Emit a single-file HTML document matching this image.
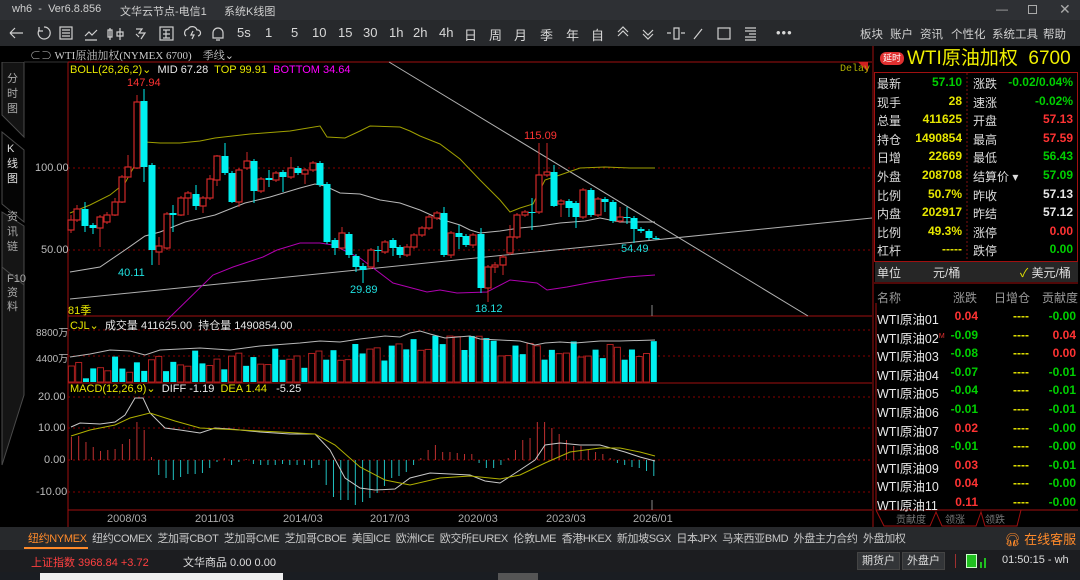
<!DOCTYPE html>
<html><head><meta charset="utf-8">
<style>
*{margin:0;padding:0;box-sizing:border-box}
body{width:1080px;height:580px;background:#000;overflow:hidden;position:relative;font-family:"Liberation Sans","Noto Sans CJK SC",sans-serif;font-size:12px;color:#ccc}
.a{position:absolute;white-space:nowrap}
#title{left:0;top:0;width:1080px;height:20px;background:#2e3034}
#tool{left:0;top:20px;width:1080px;height:26px;background:#27292c}
#nav{left:0;top:527px;width:1080px;height:23px;background:#27292c}
#stat{left:0;top:550px;width:1080px;height:22px;background:#1c1d20}
#task{left:0;top:572px;width:1080px;height:8px;background:#1a1d22}
.tb{color:#d8d8d8;font-size:13px;top:25px}
.tt{color:#cfcfcf;font-size:11px;top:3px}
.tr{color:#d0d0d0;font-size:11.5px;top:26px}
.r{color:#ff3333}.g{color:#00d000}.y{color:#e6e600}.w{color:#e8e8e8}
</style></head><body>
<div id="title" class="a"></div>
<div class="a tt" style="left:12px">wh6&nbsp; - &nbsp;Ver6.8.856</div>
<div class="a tt" style="left:120px">文华云节点-电信1</div>
<div class="a tt" style="left:224px">系统K线图</div>
<div class="a" style="left:996px;top:2px;color:#aaa;font-size:12px">—</div>
<div class="a" style="left:1028px;top:5px;width:9px;height:9px;border:1px solid #aaa"></div>
<div class="a" style="left:1059px;top:1px;color:#aaa;font-size:14px">✕</div>
<div id="tool" class="a"></div>
<svg class="a" style="left:0;top:20px" width="800" height="26" viewBox="0 20 800 26" fill="none" stroke="#d0d0d0" stroke-width="1.2">
<path d="M10 33h13M10 33l5-5M10 33l5 5"/>
<path d="M44 27a6 6 0 1 1-5 3M39 27v4h4"/>
<rect x="60" y="27" width="12" height="12"/><path d="M62 30h8M62 33h8M62 36h8"/>
<path d="M85 36l4-4 3 3 5-5M85 40h12"/>
<path d="M110 28v12M108 30h4v7h-4zM120 28v12M117 32h6v4h-6z"/>
<path d="M136 29l6 0-3 4h6l-4 6M136 34l3 3"/>
<rect x="160" y="27" width="13" height="13"/><path d="M163 30h7M166 30v8M163 34h7M163 38h7"/>
<path d="M186 36a4 4 0 0 1 2-7a5 5 0 0 1 9 1a3 3 0 0 1 1 6M193 31l-2 4h3l-2 4"/>
<path d="M213 38v-5a5 5 0 0 1 10 0v5h-10zM216 40h4"/>
<path d="M618 36l5-5 5 5M618 32l5-5 5 5M643 30l5 5 5-5M643 34l5 5 5-5"/>
<path d="M667 33h4M674 28h5v11h-5zM681 33h4"/>
<path d="M694 39l8-10"/>
<rect x="718" y="28" width="12" height="11"/>
<path d="M745 28h11M745 31h11M749 34h7M745 37h11M745 40h11"/>
</svg>
<div class="a tb" style="left:237px">5s</div>
<div class="a tb" style="left:265px">1</div>
<div class="a tb" style="left:291px">5</div>
<div class="a tb" style="left:312px">10</div>
<div class="a tb" style="left:338px">15</div>
<div class="a tb" style="left:363px">30</div>
<div class="a tb" style="left:389px">1h</div>
<div class="a tb" style="left:413px">2h</div>
<div class="a tb" style="left:439px">4h</div>
<div class="a tb" style="left:464px">日</div>
<div class="a tb" style="left:489px">周</div>
<div class="a tb" style="left:514px">月</div>
<div class="a tb" style="left:540px">季</div>
<div class="a tb" style="left:566px">年</div>
<div class="a tb" style="left:591px">自</div>
<div class="a tb" style="left:776px;letter-spacing:1px">•••</div>
<div class="a tr" style="left:860px">板块</div>
<div class="a tr" style="left:890px">账户</div>
<div class="a tr" style="left:920px">资讯</div>
<div class="a tr" style="left:951px">个性化</div>
<div class="a tr" style="left:992px">系统工具</div>
<div class="a tr" style="left:1043px">帮助</div>

<div class="a" style="left:30px;top:47px;color:#ccc;font-family:'Liberation Serif','Noto Serif CJK SC',serif;font-size:11px">⊂⊃ WTI原油加权(NYMEX 6700)&nbsp;&nbsp;&nbsp; 季线⌄</div>

<!-- left tabs -->
<svg class="a" style="left:0;top:62px" width="26" height="420" fill="#151515" stroke="#4a4a4a">
<path d="M2 0h22v75l-22-22z" fill="#141414"/>
<path d="M2 70l22 18v72l-22-18z" fill="#050505"/>
<path d="M2 150l22 14v70l-22-20z"/>
<path d="M2 205l22 18v110l-22 70z"/>
</svg>
<div class="a" style="left:7px;top:72px;width:12px;color:#aaa;font-size:11px;line-height:15px;white-space:normal">分时图</div>
<div class="a" style="left:7px;top:142px;width:12px;color:#e0e0e0;font-size:11px;line-height:15px;white-space:normal">K线图</div>
<div class="a" style="left:7px;top:210px;width:12px;color:#aaa;font-size:11px;line-height:15px;white-space:normal">资讯链</div>
<div class="a" style="left:7px;top:272px;width:12px;color:#aaa;font-size:11px;line-height:14px;white-space:normal">F10资料</div>

<svg id="ch" class="a" style="left:0;top:0" width="1080" height="580"></svg>

<div class="a" style="left:70px;top:63px;font-size:11px"><span style="color:#e6e600">BOLL(26,26,2)⌄</span>&nbsp; <span class="w">MID 67.28</span>&nbsp; <span style="color:#e6e600">TOP 99.91</span>&nbsp; <span style="color:#ff00ff">BOTTOM 34.64</span></div>
<div class="a" style="left:840px;top:64px;font-size:10px;color:#b0b000;font-family:'Liberation Mono',monospace">Delay</div>
<div class="a r" style="left:127px;top:77px;font-size:11px">147.94</div>
<div class="a" style="left:118px;top:267px;font-size:11px;color:#20e0e0">40.11</div>
<div class="a" style="left:350px;top:284px;font-size:11px;color:#20e0e0">29.89</div>
<div class="a" style="left:475px;top:303px;font-size:11px;color:#20e0e0">18.12</div>
<div class="a r" style="left:524px;top:130px;font-size:11px">115.09</div>
<div class="a" style="left:621px;top:243px;font-size:11px;color:#20e0e0">54.49</div>
<div class="a" style="left:68px;top:302px;font-size:11px;color:#e6e600">81季</div>
<div class="a" style="left:35px;top:162px;font-size:11px;color:#bbb">100.00</div>
<div class="a" style="left:41px;top:244px;font-size:11px;color:#bbb">50.00</div>
<div class="a" style="left:70px;top:317px;font-size:11px"><span style="color:#e6e600">CJL⌄</span>&nbsp; <span class="w">成交量 411625.00&nbsp; 持仓量 1490854.00</span></div>
<div class="a" style="left:36px;top:324px;font-size:10px;color:#bbb">8800万</div>
<div class="a" style="left:36px;top:350px;font-size:10px;color:#bbb">4400万</div>
<div class="a" style="left:70px;top:382px;font-size:11px"><span style="color:#e6e600">MACD(12,26,9)⌄</span>&nbsp; <span class="w">DIFF -1.19</span>&nbsp; <span style="color:#e6e600">DEA 1.44</span>&nbsp;&nbsp; <span class="w">-5.25</span></div>
<div class="a" style="left:38px;top:391px;font-size:11px;color:#bbb">20.00</div>
<div class="a" style="left:38px;top:422px;font-size:11px;color:#bbb">10.00</div>
<div class="a" style="left:44px;top:454px;font-size:11px;color:#bbb">0.00</div>
<div class="a" style="left:36px;top:486px;font-size:11px;color:#bbb">-10.00</div>
<div class="a" style="left:107px;top:513px;font-size:11px;color:#aaa">2008/03</div>
<div class="a" style="left:195px;top:513px;font-size:11px;color:#aaa">2011/03</div>
<div class="a" style="left:283px;top:513px;font-size:11px;color:#aaa">2014/03</div>
<div class="a" style="left:370px;top:513px;font-size:11px;color:#aaa">2017/03</div>
<div class="a" style="left:458px;top:513px;font-size:11px;color:#aaa">2020/03</div>
<div class="a" style="left:546px;top:513px;font-size:11px;color:#aaa">2023/03</div>
<div class="a" style="left:633px;top:513px;font-size:11px;color:#aaa">2026/01</div>

<!-- right panel -->
<div class="a" style="left:880px;top:52px;width:24px;height:13px;background:#e03030;border-radius:6px;color:#fff;font-size:9px;text-align:center;line-height:13px">延时</div>
<div class="a" style="left:907px;top:48px;color:#f0f000;font-size:19px;line-height:22px">WTI原油加权&nbsp; 6700</div>
<div id="rp"></div>

<!-- bottom -->
<div id="nav" class="a"></div>
<div class="a" style="left:28px;top:530px;font-size:11px;color:#c8c8c8;letter-spacing:-0.35px">
<span style="color:#ff8a2a">纽约NYMEX</span>&nbsp; 纽约COMEX&nbsp; 芝加哥CBOT&nbsp; 芝加哥CME&nbsp; 芝加哥CBOE&nbsp; 美国ICE&nbsp; 欧洲ICE&nbsp; 欧交所EUREX&nbsp; 伦敦LME&nbsp; 香港HKEX&nbsp; 新加坡SGX&nbsp; 日本JPX&nbsp; 马来西亚BMD&nbsp; 外盘主力合约&nbsp; 外盘加权</div>
<div class="a" style="left:24px;top:547px;width:64px;height:2px;background:#ff8a2a"></div>
<div class="a" style="left:1004px;top:529px;font-size:13px;color:#ff8a2a">🎧︎ 在线客服</div>
<div id="stat" class="a"></div>
<div class="a" style="left:31px;top:554px;font-size:11px;color:#ff4040">上证指数 3968.84 +3.72</div>
<div class="a" style="left:183px;top:554px;font-size:11px;color:#ddd">文华商品 0.00 0.00</div>
<div class="a" style="left:857px;top:552px;width:43px;height:18px;background:#333538;border:1px solid #444;font-size:11px;color:#ddd;text-align:center;line-height:16px">期货户</div>
<div class="a" style="left:902px;top:552px;width:43px;height:18px;background:#333538;border:1px solid #444;font-size:11px;color:#ddd;text-align:center;line-height:16px">外盘户</div>
<div class="a" style="left:955px;top:554px;width:1px;height:14px;background:#a03030"></div>
<div class="a" style="left:966px;top:554px;width:11px;height:14px;background:#20c020;border:1px solid #cfc"></div>
<div class="a" style="left:980px;top:562px;width:2px;height:6px;background:#20c020"></div>
<div class="a" style="left:984px;top:558px;width:2px;height:10px;background:#20c020"></div>
<div class="a" style="left:1002px;top:554px;font-size:11px;color:#ddd">01:50:15 - wh</div>
<div id="task" class="a"></div>
<div class="a" style="left:40px;top:573px;width:243px;height:7px;background:#f0f0f0"></div>
<div class="a" style="left:498px;top:573px;width:40px;height:7px;background:#555"></div>

<script>
var S='';
function L(x1,y1,x2,y2,c,d,w){S+='<line x1="'+x1+'" y1="'+y1+'" x2="'+x2+'" y2="'+y2+'" stroke="'+c+'" stroke-width="'+(w||1)+'"'+(d?' stroke-dasharray="'+d+'"':'')+'/>';}
function P(pts,c){S+='<polyline fill="none" stroke="'+c+'" stroke-width="1" points="'+pts.map(function(p){return p.join(',')}).join(' ')+'"/>';}
L(68,62,872,62,'#a01010');L(68,62,68,527,'#a01010');
L(68,316,872,316,'#a01010');L(68,383,872,383,'#a01010');L(68,510,872,510,'#a01010');
S+='<path d="M858 62h10v10z" fill="#d02020"/>';
L(24,62,68,62,'#333');
[168,250].forEach(function(y){L(68,y,872,y,'#800','2 3');});
[330,356].forEach(function(y){L(68,y,872,y,'#800','2 3');});
[397,428,492].forEach(function(y){L(68,y,872,y,'#800','2 3');});
L(68,460,872,460,'#900','2 3');
L(652,305,652,316,'#888');L(652,500,652,510,'#888');
L(389,62,808,316,'#b0b0b0');L(70,299,872,218,'#b0b0b0');
P([[70,213],[90,205],[110,195],[125,183],[135,165],[145,142],[160,143],[180,143],[200,141],[215,138],[250,134],[290,131],[320,126],[327,137],[345,138],[360,131],[370,126],[400,127],[410,131],[420,136],[440,144],[460,159],[480,180],[500,200],[510,212],[520,208],[533,204],[545,180],[560,175],[580,168],[605,167],[630,168],[655,168]],'#a0a000');
P([[70,272],[100,267],[125,250],[145,236],[160,232],[185,222],[215,215],[245,203],[270,197],[300,188],[315,184],[325,186],[340,193],[360,194],[380,200],[400,203],[420,210],[440,219],[460,225],[470,230],[480,233],[500,231],[520,228],[540,226],[560,223],[585,221],[600,218],[620,222],[645,222],[655,222]],'#b8b8b8');
P([[167,320],[213,275],[233,267],[263,257],[277,250],[300,243],[320,243],[333,245],[360,258],[393,283],[427,292],[440,290],[457,293],[487,292],[510,280],[537,283],[547,290],[567,287],[593,282],[627,277],[655,275]],'#b000b0');
var C="r71 220 230 215 233|r77 209 220 205 222|c85 209 226 202 232|c93 225 228 223 234|r100 217 228 215 247|r107 215 222 212 224|r115 202 215 198 216|r122 177 202 175 203|r128 167 177 155 178|r137 102 168 95 169|c144 101 167 89 182|c152 165 250 163 265|r159 246 252 237 265|r167 214 248 212 250|c173 213 215 205 232|r181 198 215 196 216|r188 193 198 191 215|c196 194 206 185 210|r203 198 206 196 213|r210 179 198 175 200|r217 156 180 155 186|c225 156 173 143 175|c232 173 202 171 203|r239 170 202 168 207|r247 161 168 152 170|c254 161 191 159 203|r261 179 191 177 193|c269 178 180 170 187|r276 173 180 171 182|c283 172 177 170 192|r291 168 177 157 179|c298 168 173 166 175|r305 170 174 168 184|r313 163 170 161 172|c320 163 185 161 187|c327 184 242 182 244|c335 240 248 238 255|r342 233 248 227 250|c349 234 255 232 258|c356 256 267 254 272|c363 266 270 263 283|r371 250 267 248 269|c378 250 251 246 262|r385 242 252 240 254|c393 240 248 238 256|c400 247 255 245 258|r407 247 255 244 257|r414 235 247 233 249|r422 228 235 226 237|r429 217 228 215 230|r437 213 218 211 220|c444 213 255 207 257|r451 233 255 231 258|c459 233 237 225 249|c466 236 245 234 247|r473 235 245 233 248|c481 234 288 228 293|r488 267 288 265 302|r495 265 267 262 273|r503 257 265 255 275|r510 237 253 225 255|r517 215 237 213 239|r525 212 215 210 217|c532 212 213 198 230|r539 175 212 143 214|r547 172 175 143 177|c554 172 206 165 207|r561 201 204 199 217|c569 201 208 199 217|c576 203 217 201 228|r583 190 217 188 219|c591 190 215 188 217|r598 199 215 197 217|c605 199 202 197 212|c613 202 221 200 223|r620 217 221 207 223|c627 217 218 207 224|c634 218 229 216 243|c641 229 231 227 233|c649 231 238 229 240|c656 238 239 236 240".split('|');
C.forEach(function(s){var t=s[0],v=s.slice(1).split(' ').map(Number),x=v[0];
 var col=t=='r'?'#d02828':'#00f0f0';
 L(x,v[3],x,v[4],col);
 var h=Math.max(1,v[2]-v[1]);
 if(t=='r')S+='<rect x="'+(x-3)+'" y="'+v[1]+'" width="6" height="'+h+'" fill="#000" stroke="'+col+'" stroke-width="1.2"/>';
 else S+='<rect x="'+(x-3.5)+'" y="'+v[1]+'" width="7" height="'+h+'" fill="'+col+'"/>';
});
for(var i=0;i<81;i++){var x=71.4+7.28*i;
 var base=i<18?12+i*0.5:i<35?20+(i-18)*0.3:i<48?26+(i-35)*0.8:i<58?38+(i-48)*0.8:i<66?32:30;
 var h=base+7*Math.sin(i*2.3)+4*Math.cos(i*1.1);
 var red=(Math.sin(i*1.7+0.5)>0);
 if(red)S+='<rect x="'+(x-3)+'" y="'+(382-h)+'" width="6" height="'+h+'" fill="#000" stroke="#b02020"/>';
 else S+='<rect x="'+(x-3)+'" y="'+(382-h)+'" width="6" height="'+h+'" fill="#00f0f0"/>';
}
P([[70,357],[90,354],[110,350],[130,351],[145,355],[160,350],[200,348],[230,350],[260,346],[300,343],[320,341],[340,342],[360,339],[385,336],[400,337],[410,333],[420,331],[430,334],[445,338],[470,336],[480,339],[500,340],[520,341],[535,345],[545,343],[560,342],[575,343],[600,341],[620,341],[655,340]],'#b8b8b8');
var M=[23,24,18,13,9,10,11,16,21,38,30,3,-15,-18,-20,-17,-14,-14,-13,-8,-2,2,-5,-2,1,-4,-5,-5,-5,-4,-5,-5,-5,-8,-5,-25,-37,-40,-40,-45,-42,-38,-33,-26,-18,-16,-12,-5,2,10,15,8,8,7,6,6,-3,-8,-8,-5,2,10,20,22,38,38,32,26,20,14,14,10,8,6,2,-3,-5,-7,-8,-11,-16];
M.forEach(function(v,i){var x=71.4+7.28*i;L(x,460,x,460-v,v>0?'#c03030':'#20c0c0');});
P([[71,427],[80,423],[100,424],[115,422],[125,415],[135,398],[143,398],[150,413],[165,428],[180,430],[200,433],[215,428],[230,429],[260,432],[290,434],[315,434],[330,450],[345,478],[360,488],[375,490],[395,489],[410,478],[430,473],[470,475],[485,481],[500,483],[520,470],[535,460],[545,445],[560,443],[580,445],[600,445],[625,452],[640,457],[655,461]],'#c8c8c8');
P([[71,436],[90,430],[115,425],[130,418],[150,413],[175,421],[200,428],[240,430],[280,432],[315,434],[335,445],[360,467],[385,480],[410,485],[440,478],[470,476],[500,479],[520,475],[545,463],[570,452],[600,448],[620,448],[640,452],[655,456]],'#b0b000');
L(873,46,873,527,'#a01010');
S+='<rect x="874.5" y="72.5" width="203" height="189" fill="none" stroke="#a01010"/>';
L(967,73,967,261,'#801010','2 2');
S+='<rect x="875" y="262" width="203" height="20" fill="#262626"/>';
L(874,283,1078,283,'#a01010');
L(876,303,876,510,'#a01010');L(876,510,1078,510,'#a01010');
S+='<path d="M876 510l8 16h46l6-14 6 14h34l5-14 4 14h32l4-16" fill="none" stroke="#a01010"/>';
document.getElementById('ch').innerHTML=S;
var R=[["最新","57.10","g","涨跌","-0.02/0.04%","g"],["现手","28","y","速涨","-0.02%","g"],["总量","411625","y","开盘","57.13","r"],["持仓","1490854","y","最高","57.59","r"],["日增","22669","y","最低","56.43","g"],["外盘","208708","y","结算价 ▾","57.09","g"],["比例","50.7%","y","昨收","57.13","w"],["内盘","202917","y","昨结","57.12","w"],["比例","49.3%","y","涨停","0.00","r"],["杠杆","-----","y","跌停","0.00","g"]];
var H='';
R.forEach(function(r,i){var y=75+i*18.6;
H+='<div class="a" style="left:877px;top:'+y+'px;color:#ddd;font-size:12px">'+r[0]+'</div>';
H+='<div class="a '+r[2]+'" style="right:118px;top:'+y+'px;font-size:12px;font-weight:bold">'+r[1]+'</div>';
H+='<div class="a" style="left:973px;top:'+y+'px;color:#ddd;font-size:12px">'+r[3]+'</div>';
H+='<div class="a '+r[5]+'" style="right:7px;top:'+y+'px;font-size:12px;font-weight:bold">'+r[4]+'</div>';});
H+='<div class="a" style="left:877px;top:264px;color:#ddd;font-size:12px">单位</div><div class="a" style="left:933px;top:264px;color:#ddd;font-size:12px">元/桶</div><div class="a" style="left:1020px;top:264px;color:#ddd;font-size:12px"><span class="y">✓</span> 美元/桶</div>';
H+='<div class="a" style="left:877px;top:289px;color:#999;font-size:12px">名称</div><div class="a" style="left:953px;top:289px;color:#999;font-size:12px">涨跌</div><div class="a" style="left:994px;top:289px;color:#999;font-size:12px">日增仓</div><div class="a" style="left:1042px;top:289px;color:#999;font-size:12px">贡献度</div>';
var Q=[["01","0.04","r","-0.00","g"],["02","-0.09","g","0.04","r"],["03","-0.08","g","0.00","r"],["04","-0.07","g","-0.01","g"],["05","-0.04","g","-0.01","g"],["06","-0.01","g","-0.01","g"],["07","0.02","r","-0.00","g"],["08","-0.01","g","-0.00","g"],["09","0.03","r","-0.01","g"],["10","0.04","r","-0.00","g"],["11","0.11","r","-0.00","g"]];
Q.forEach(function(q,i){var y=309+i*18.6;
H+='<div class="a" style="left:877px;top:'+y+'px;color:#e8e8e8;font-size:12.5px">WTI原油'+q[0]+(i==1?'<sup style="color:#e03030;font-size:7px">M</sup>':'')+'</div>';
H+='<div class="a '+q[2]+'" style="right:102px;top:'+y+'px;font-size:12px;font-weight:bold">'+q[1]+'</div>';
H+='<div class="a y" style="left:1013px;top:'+y+'px;font-size:12px;font-weight:bold">----</div>';
H+='<div class="a '+q[4]+'" style="right:4px;top:'+y+'px;font-size:12px;font-weight:bold">'+q[3]+'</div>';});
H+='<div class="a" style="left:896px;top:511px;color:#777;font-size:10px">贡献度</div><div class="a" style="left:945px;top:511px;color:#777;font-size:10px">领涨</div><div class="a" style="left:985px;top:511px;color:#777;font-size:10px">领跌</div>';
document.getElementById('rp').innerHTML=H;
</script>
</body></html>
